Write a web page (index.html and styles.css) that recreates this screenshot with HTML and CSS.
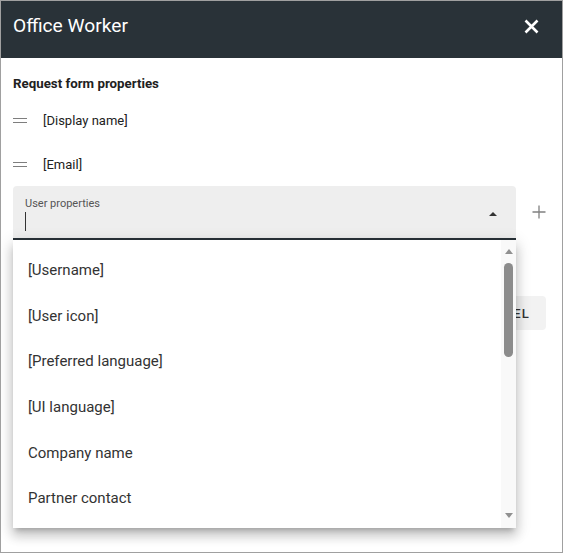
FILE: index.html
```html
<!DOCTYPE html>
<html lang="en">
<head>
<meta charset="utf-8">
<title>Office Worker</title>
<link rel="stylesheet" href="styles.css">
</head>
<body>
<div class="dialog">
  <header class="header">
    <h1 class="title">Office Worker</h1>
    <button class="close" aria-label="Close">
      <svg width="15" height="15" viewBox="0 0 15 15"><path d="M1.5 1.5 L13.5 13.5 M13.5 1.5 L1.5 13.5" stroke="#fff" stroke-width="2.6" stroke-linecap="butt"/></svg>
    </button>
  </header>
  <main class="content">
    <h2 class="section-title">Request form properties</h2>
    <div class="prop-row"><span class="handle"></span><span class="prop-text">[Display name]</span></div>
    <div class="prop-row"><span class="handle"></span><span class="prop-text">[Email]</span></div>
    <div class="field-row">
      <div class="select-wrap">
        <div class="select">
          <div class="select-main">
            <div class="select-label">User properties</div>
            <div class="caret"></div>
          </div>
          <span class="select-arrow"></span>
        </div>
        <div class="panel">
          <ul class="options">
            <li class="option">[Username]</li>
            <li class="option">[User icon]</li>
            <li class="option">[Preferred language]</li>
            <li class="option">[UI language]</li>
            <li class="option">Company name</li>
            <li class="option">Partner contact</li>
          </ul>
          <div class="scrollbar">
            <span class="sb-up"></span>
            <span class="sb-thumb"></span>
            <span class="sb-fill"></span>
            <span class="sb-down"></span>
          </div>
        </div>
      </div>
      <button class="add" aria-label="Add">
        <svg width="14" height="14" viewBox="0 0 14 14"><path d="M7 0.5 V13.5 M0.5 7 H13.5" stroke="#808080" stroke-width="1.3"/></svg>
      </button>
    </div>
    <div class="actions">
      <button class="btn">CANCEL</button>
    </div>
  </main>
</div>
</body>
</html>
```
FILE: styles.css
```css
* { box-sizing: border-box; }
html, body { margin: 0; padding: 0; background: #fff; }
body { font-family: Roboto, "Liberation Sans", Arial, sans-serif; color: #212121; }

.dialog {
  width: 563px;
  height: 553px;
  border: 1px solid #a0a0a0;
  background: #fff;
  overflow: hidden;
}

.header {
  height: 57px;
  background: #293238;
  display: flex;
  justify-content: space-between;
  align-items: flex-start;
  padding: 13px 23px 0 12px;
}
.title {
  margin: 0;
  font-size: 19.2px;
  line-height: 24px;
  font-weight: 400;
  color: #fff;
}
.close {
  margin-top: 5px;
  width: 15px;
  height: 15px;
  padding: 0;
  border: 0;
  background: none;
  display: block;
}
.close svg { display: block; }

.content {
  padding: 0 16px 0 12px;
}
.section-title {
  margin: 18px 0 6px;
  font-size: 13.3px;
  line-height: 16px;
  font-weight: 700;
  color: #212121;
}
.prop-row {
  height: 44px;
  display: flex;
  align-items: center;
  gap: 16px;
}
.handle {
  width: 14px;
  height: 5px;
  border-top: 1.5px solid #7e7e7e;
  border-bottom: 1.5px solid #7e7e7e;
}
.prop-text {
  font-size: 13px;
  color: #212121;
}

.field-row {
  display: flex;
  align-items: flex-start;
}
.select-wrap {
  position: relative;
  width: 504px;
}
.select {
  height: 54px;
  background: #eeeeee;
  border-radius: 4px 4px 0 0;
  border-bottom: 2px solid #293238;
  display: flex;
  align-items: flex-start;
  padding-left: 12px;
}
.select-main {
  flex: 1;
  padding-top: 11px;
}
.select-label {
  font-size: 11px;
  line-height: 13px;
  color: #555;
}
.caret {
  margin-top: 2px;
  width: 1px;
  height: 19px;
  background: #333;
}
.select-arrow {
  margin-top: 26px;
  margin-right: 19px;
  width: 0;
  height: 0;
  border-left: 4px solid transparent;
  border-right: 4px solid transparent;
  border-bottom: 4px solid #333;
}
.add {
  margin: 19px 0 0 16px;
  width: 14px;
  height: 14px;
  padding: 0;
  border: 0;
  background: none;
}
.add svg { display: block; }

.panel {
  position: absolute;
  top: 100%;
  left: 0;
  right: 0;
  height: 288px;
  background: #fff;
  display: flex;
  box-shadow: 0 5px 5px -3px rgba(0,0,0,.2), 0 8px 10px 1px rgba(0,0,0,.14), 0 3px 14px 2px rgba(0,0,0,.12);
  z-index: 10;
}
.options {
  list-style: none;
  margin: 0;
  padding: 7px 0 0;
  flex: 1;
}
.option {
  height: 45.7px;
  display: flex;
  align-items: center;
  padding-left: 15px;
  font-size: 15px;
  color: #333;
}
.scrollbar {
  width: 15px;
  background: #f9f9f9;
  display: flex;
  flex-direction: column;
  align-items: center;
  padding: 9px 0 10px;
}
.sb-up, .sb-down {
  width: 0;
  height: 0;
  border-left: 4.5px solid transparent;
  border-right: 4.5px solid transparent;
}
.sb-up { border-bottom: 5px solid #909090; }
.sb-down { border-top: 5px solid #909090; }
.sb-thumb {
  margin-top: 9px;
  width: 9px;
  height: 94px;
  border-radius: 4.5px;
  background: #8c8c8c;
}
.sb-fill { flex: 1; }

.actions {
  display: flex;
  justify-content: flex-end;
  margin-top: 56px;
}
.btn {
  height: 34px;
  padding: 0 16px;
  border: 0;
  border-radius: 4px;
  background: #f2f2f2;
  font-family: Roboto, "Liberation Sans", Arial, sans-serif;
  font-size: 13px;
  font-weight: 500;
  letter-spacing: 1.2px;
  color: #333;
}
```
